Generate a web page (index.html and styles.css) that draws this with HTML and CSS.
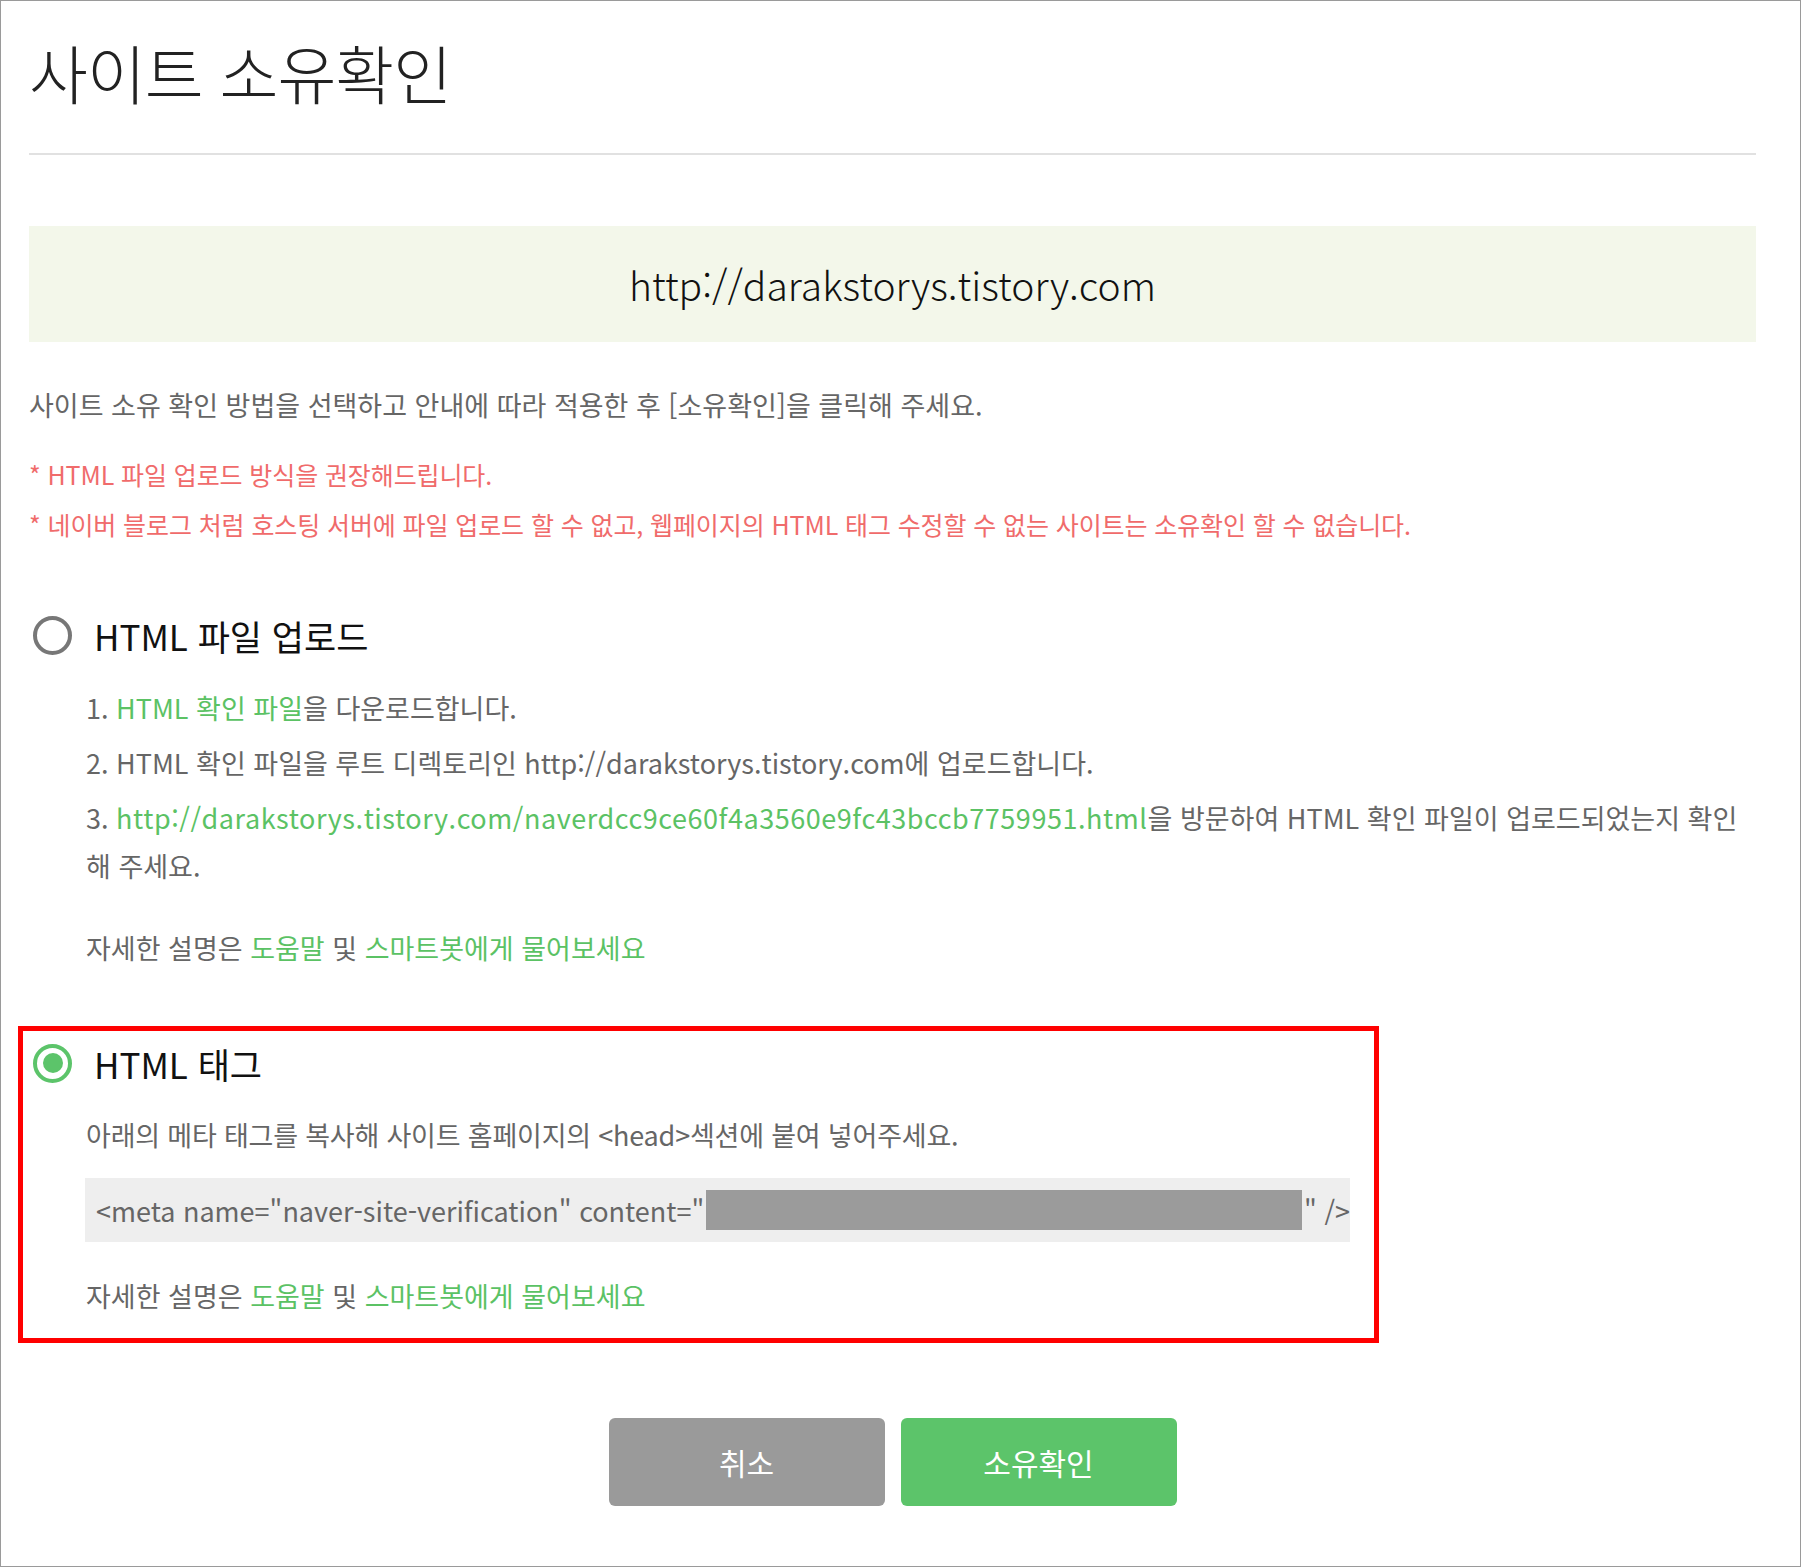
FILE: index.html
```html
<!DOCTYPE html>
<html lang="ko">
<head>
<meta charset="utf-8">
<title>사이트 소유확인</title>
<link rel="stylesheet" href="styles.css">
</head>
<body>
<div class="page">
  <h1 class="title">사이트 소유확인</h1>
  <div class="divider"></div>
  <div class="site-box">http://darakstorys.tistory.com</div>
  <p class="desc">사이트 소유 확인 방법을 선택하고 안내에 따라 적용한 후 [소유확인]을 클릭해 주세요.</p>
  <p class="notice notice-first">* HTML 파일 업로드 방식을 권장해드립니다.</p>
  <p class="notice">* 네이버 블로그 처럼 호스팅 서버에 파일 업로드 할 수 없고, 웹페이지의 HTML 태그 수정할 수 없는 사이트는 소유확인 할 수 없습니다.</p>

  <div class="method">
    <div class="radio-row">
      <span class="radio"></span>
      <span class="radio-label">HTML 파일 업로드</span>
    </div>
    <ol class="steps">
      <li><span class="num">1.</span> <span class="green">HTML 확인 파일</span><span>을 다운로드합니다.</span></li>
      <li>2. HTML 확인 파일을 루트 디렉토리인 http://darakstorys.tistory.com에 업로드합니다.</li>
      <li>3. <span class="green url">http://darakstorys.tistory.com/naverdcc9ce60f4a3560e9fc43bccb7759951.html</span>을 방문하여 HTML 확인 파일이 업로드되었는지 확인 해 주세요.</li>
    </ol>
    <p class="help help-first">자세한 설명은 <span class="green">도움말</span> 및 <span class="green">스마트봇에게 물어보세요</span></p>
  </div>

  <div class="method method-selected">
    <div class="radio-row">
      <span class="radio radio-on"><span class="radio-dot"></span></span>
      <span class="radio-label">HTML 태그</span>
    </div>
    <p class="tag-desc">아래의 메타 태그를 복사해 사이트 홈페이지의 &lt;head&gt;섹션에 붙여 넣어주세요.</p>
    <div class="code-box"><span>&lt;meta name="naver-site-verification" content="</span><span class="redacted"></span><span>" /&gt;</span></div>
    <p class="help help-second">자세한 설명은 <span class="green">도움말</span> 및 <span class="green">스마트봇에게 물어보세요</span></p>
  </div>

  <div class="buttons">
    <button class="btn btn-cancel" type="button">취소</button>
    <button class="btn btn-confirm" type="button">소유확인</button>
  </div>
</div>
</body>
</html>
```

FILE: styles.css
```css
* { box-sizing: border-box; }
html, body { margin: 0; padding: 0; background: #fff; }
body {
  font-family: "Noto Sans CJK KR", "Noto Sans", sans-serif;
  color: #666;
}
.page {
  width: 1801px;
  height: 1567px;
  border: 1px solid #9a9a9a;
  padding: 0 44px 0 28px;
}
.title {
  margin: 0;
  padding-top: 30px;
  font-size: 64px;
  line-height: 80px;
  font-weight: 300;
  letter-spacing: -1px;
  color: #222;
}
.divider {
  margin-top: 42px;
  height: 2px;
  background: #e1e1e1;
}
.site-box {
  margin-top: 71px;
  height: 116px;
  line-height: 116px;
  background: #f3f7ea;
  text-align: center;
  font-size: 39px;
  font-weight: 300;
  color: #111;
}
.desc {
  margin: 43px 0 0;
  font-size: 27px;
  line-height: 40px;
  color: #666;
}
.notice {
  margin: 0;
  font-size: 25px;
  line-height: 50px;
  letter-spacing: -0.1px;
  color: #f06b6b;
}
.notice-first { margin-top: 24px; }
.method { margin-top: 61px; }
.radio-row {
  display: flex;
  align-items: center;
  height: 50px;
  padding-left: 4px;
}
.radio {
  width: 39px;
  height: 39px;
  border: 4px solid #777;
  border-radius: 50%;
  display: flex;
  align-items: center;
  justify-content: center;
  flex: none;
}
.radio-on { border-color: #5cc46a; }
.radio-dot {
  width: 20px;
  height: 20px;
  border-radius: 50%;
  background: #5cc46a;
}
.radio-label {
  margin-left: 22px;
  font-size: 35px;
  color: #111;
}
.steps {
  list-style: none;
  margin: 24px 0 0;
  padding: 0 0 0 57px;
  font-size: 27px;
  line-height: 48px;
  color: #666;
}
.steps li + li { margin-top: 7px; }
.green { color: #5bc264; }
.url { letter-spacing: 0.55px; }
.help {
  margin: 0;
  padding-left: 57px;
  font-size: 27px;
  line-height: 48px;
  color: #666;
}
.help-first { margin-top: 34px; }
.method-selected {
  margin-top: 54px;
  margin-left: -11px;
  width: 1361px;
  border: 5px solid #ff0000;
  padding: 7px 0 18px 6px;
}
.tag-desc {
  margin: 23px 0 0;
  padding-left: 57px;
  font-size: 27px;
  line-height: 48px;
  letter-spacing: -0.2px;
  color: #666;
}
.code-box {
  margin: 19px 0 0 56px;
  width: 1265px;
  height: 64px;
  background: #eeeeee;
  display: flex;
  align-items: center;
  padding-left: 11px;
  font-size: 27px;
  color: #666;
  white-space: nowrap;
}
.redacted {
  display: block;
  width: 596px;
  height: 40px;
  background: #9b9b9b;
  margin: 0 2px;
}
.help-second { margin-top: 30px; }
.buttons {
  margin-top: 75px;
  display: flex;
  justify-content: center;
  gap: 16px;
}
.btn {
  width: 276px;
  height: 88px;
  border: none;
  border-radius: 6px;
  font-family: "Noto Sans CJK KR", "Noto Sans", sans-serif;
  font-size: 30px;
  color: #fff;
  cursor: pointer;
}
.btn-cancel { background: #9a9a9a; }
.btn-confirm { background: #5cc46a; }
```
